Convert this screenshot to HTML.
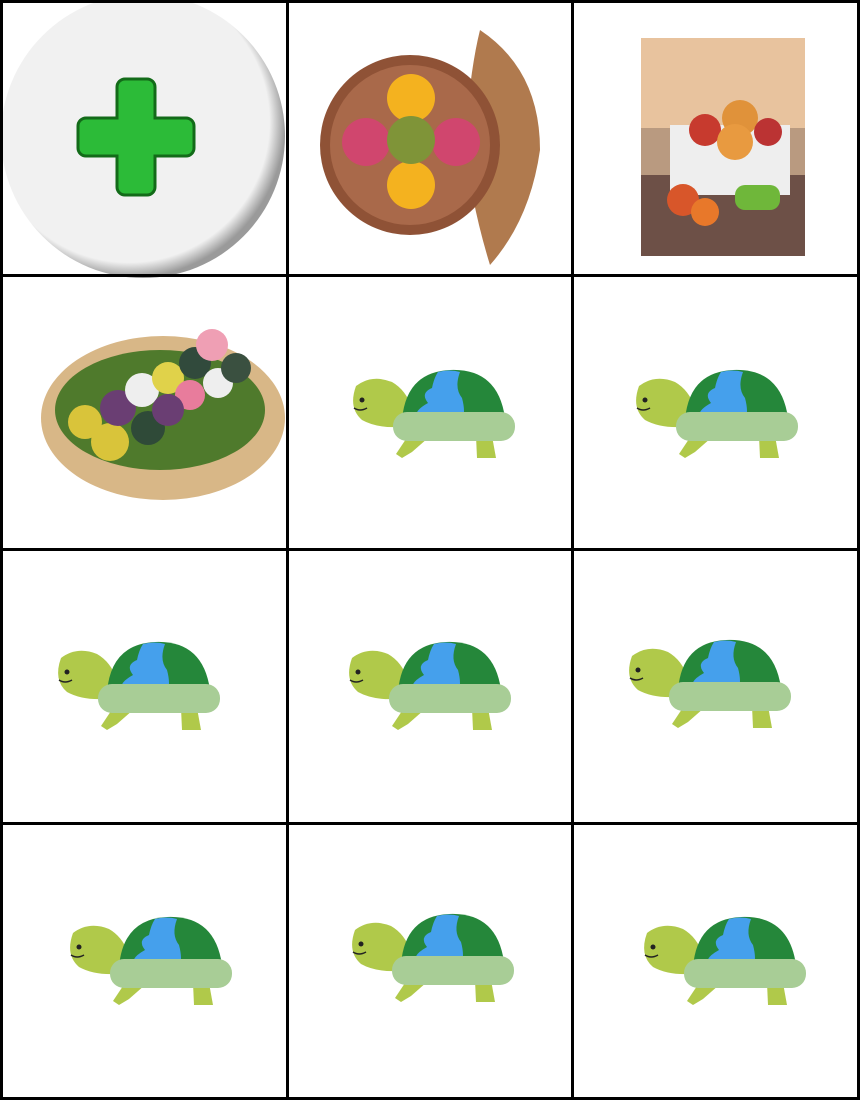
<!DOCTYPE html>
<html><head><meta charset="utf-8"><style>
html,body{margin:0;padding:0;background:#fff;width:860px;height:1100px;overflow:hidden}
svg{display:block}
</style></head><body>
<svg width="860" height="1100" viewBox="0 0 860 1100">
<defs>
<radialGradient id="cg" cx="0.45" cy="0.45" r="0.55"><stop offset="0.9" stop-color="#f1f1f1"/><stop offset="1" stop-color="#9a9a9a"/></radialGradient>
<g id="t">
<path d="M58 68 L46 86 L52 90 L62 84 L78 70 Z" fill="#b0c94a"/>
<path d="M126 68 L127 90 L146 90 L142 68 Z" fill="#b0c94a"/>
<path d="M6 18 Q22 6 42 14 Q56 22 62 40 L60 58 Q30 62 12 52 Q-2 40 6 18 Z" fill="#b0c94a"/>
<circle cx="12" cy="32" r="2.5" fill="#222"/>
<path d="M4 40 Q10 44 17 40" stroke="#222" stroke-width="1.5" fill="none"/>
<path d="M52 52 Q56 4 100 2 Q148 0 155 50 Z" fill="#25873a"/>
<path d="M88 4 Q100 1 110 4 Q104 20 112 30 Q116 45 112 52 L70 52 Q60 45 78 35 Q70 25 82 20 Q84 10 88 4 Z" fill="#45a0ec"/>
<rect x="43" y="44" width="122" height="29" rx="14" fill="#a8cd96"/>
</g>
</defs>
<rect width="860" height="1100" fill="#fff"/>
<circle cx="143" cy="136" r="142" fill="url(#cg)"/>
<path d="M125 79 h22 a8 8 0 0 1 8 8 v31 h31 a8 8 0 0 1 8 8 v22 a8 8 0 0 1 -8 8 h-31 v31 a8 8 0 0 1 -8 8 h-22 a8 8 0 0 1 -8 -8 v-31 h-31 a8 8 0 0 1 -8 -8 v-22 a8 8 0 0 1 8 -8 h31 v-31 a8 8 0 0 1 8 -8 Z" fill="#2cbb38" stroke="#136b19" stroke-width="3"/>
<path d="M480 30 Q540 70 540 150 Q530 220 490 265 Q470 200 465 140 Q470 70 480 30Z" fill="#b07a4e"/>
<circle cx="410" cy="145" r="90" fill="#8f5236"/>
<circle cx="410" cy="145" r="80" fill="#a9694a"/>
<circle cx="411" cy="98" r="24" fill="#f4b21f"/>
<circle cx="411" cy="185" r="24" fill="#f4b21f"/>
<circle cx="366" cy="142" r="24" fill="#d0466e"/>
<circle cx="456" cy="142" r="24" fill="#d0466e"/>
<circle cx="411" cy="140" r="24" fill="#7f9438"/>
<rect x="641" y="38" width="164" height="218" fill="#b99a80"/>
<rect x="641" y="38" width="164" height="90" fill="#e8c39e"/>
<rect x="641" y="175" width="164" height="81" fill="#6d5047"/>
<rect x="670" y="125" width="120" height="70" fill="#eee"/>
<circle cx="740" cy="118" r="18" fill="#e0923a"/><circle cx="705" cy="130" r="16" fill="#c73a2e"/><circle cx="768" cy="132" r="14" fill="#b33"/>
<circle cx="735" cy="142" r="18" fill="#e89a40"/><circle cx="683" cy="200" r="16" fill="#d8562a"/><circle cx="705" cy="212" r="14" fill="#e8782a"/>
<rect x="735" y="185" width="45" height="25" rx="10" fill="#6fb73a"/>
<ellipse cx="163" cy="418" rx="122" ry="82" fill="#d8b787"/>
<ellipse cx="160" cy="410" rx="105" ry="60" fill="#4f7a2c"/>
<circle cx="85" cy="422" r="17" fill="#d9c43a"/><circle cx="110" cy="442" r="19" fill="#d9c43a"/><circle cx="118" cy="408" r="18" fill="#6a3e73"/>
<circle cx="148" cy="428" r="17" fill="#2f4a38"/><circle cx="142" cy="390" r="17" fill="#eeeeee"/><circle cx="168" cy="378" r="16" fill="#e0d24a"/>
<circle cx="190" cy="395" r="15" fill="#e87c9c"/><circle cx="168" cy="410" r="16" fill="#6a3e73"/><circle cx="195" cy="363" r="16" fill="#314a3c"/>
<circle cx="212" cy="345" r="16" fill="#ef9fb4"/><circle cx="218" cy="383" r="15" fill="#eeeeee"/><circle cx="236" cy="368" r="15" fill="#3a5040"/>
<use href="#t" x="350" y="368"/>
<use href="#t" x="633" y="368"/>
<use href="#t" x="55" y="640"/>
<use href="#t" x="346" y="640"/>
<use href="#t" x="626" y="638"/>
<use href="#t" x="67" y="915"/>
<use href="#t" x="349" y="912"/>
<use href="#t" x="641" y="915"/>
<g fill="#000">
<rect x="0" y="0" width="860" height="3"/>
<rect x="0" y="274" width="860" height="3"/>
<rect x="0" y="548" width="860" height="3"/>
<rect x="0" y="822" width="860" height="3"/>
<rect x="0" y="1097" width="860" height="3"/>
<rect x="0" y="0" width="3" height="1100"/>
<rect x="286" y="0" width="3" height="1100"/>
<rect x="571" y="0" width="3" height="1100"/>
<rect x="857" y="0" width="3" height="1100"/>
</g>
</svg>
</body></html>
